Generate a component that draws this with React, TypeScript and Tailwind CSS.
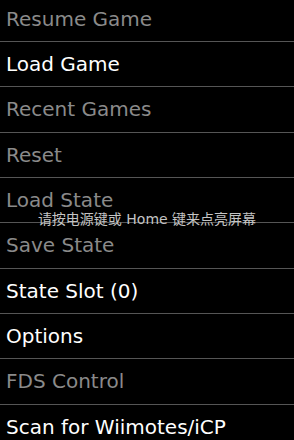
const items: { label: string; enabled: boolean }[] = [
  { label: "Resume Game", enabled: false },
  { label: "Load Game", enabled: true },
  { label: "Recent Games", enabled: false },
  { label: "Reset", enabled: false },
  { label: "Load State", enabled: false },
  { label: "Save State", enabled: false },
  { label: "State Slot (0)", enabled: true },
  { label: "Options", enabled: true },
  { label: "FDS Control", enabled: false },
  { label: "Scan for Wiimotes/iCP", enabled: true },
];

export default function App() {
  return (
    <div
      className="relative w-[294px] h-[440px] overflow-hidden bg-black"
      style={{ fontFamily: '"DejaVu Sans", "Noto Sans CJK SC", sans-serif' }}
    >
      <ul className="-mt-[3.4px]">
        {items.map((item) => (
          <li
            key={item.label}
            className={`h-[45.33px] flex items-center px-[6px] border-b border-[#555] text-[20px] whitespace-nowrap ${
              item.enabled ? "text-white" : "text-[#8a8a8a]"
            }`}
          >
            {item.label}
          </li>
        ))}
      </ul>

      <div className="absolute left-0 right-0 top-[209px] flex justify-center">
        <span className="text-[14px] leading-[20px] text-[#c4c4c4] whitespace-nowrap">
          请按电源键或 Home 键来点亮屏幕
        </span>
      </div>
    </div>
  );
}
